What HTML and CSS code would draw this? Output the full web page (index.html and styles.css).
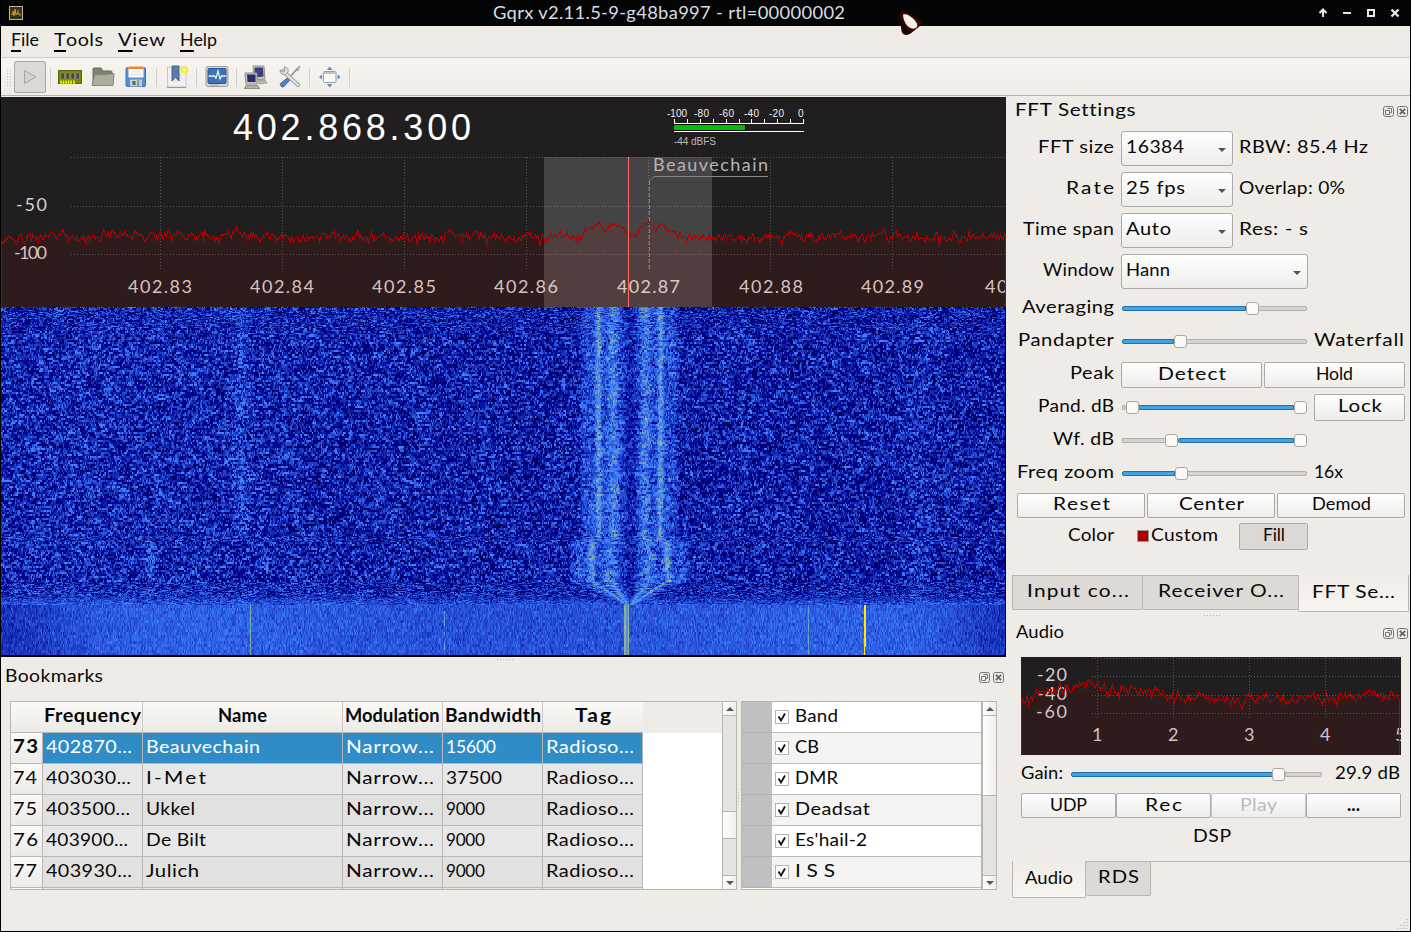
FILE: index.html
```html
<!DOCTYPE html>
<html lang="en">
<head>
<meta charset="utf-8">
<title>Gqrx</title>
<link rel="stylesheet" href="styles.css">
</head>
<body>
<div class="window">
  <header class="titlebar">
    <svg class="app-icon" viewBox="0 0 14 14"><rect x=".5" y=".5" width="13" height="13" fill="#3c2f1a" stroke="#b9b4ad"/><path d="M2 8h2V5l1 5 1-7 1 6 1-2h2M9 4v5M11 7v3" fill="none" stroke="#c79a26"/></svg>
    <span class="title" data-w="352">Gqrx v2.11.5-9-g48ba997 - rtl=00000002</span>
    <svg class="wm" viewBox="0 0 96 26"><path d="M12 9v8M8.500 13l3.500-3.500 3.500 3.500" fill="none" stroke="#e6e6e6" stroke-width="2"/><path d="M32 13h8" stroke="#e6e6e6" stroke-width="2"/><rect x="57" y="10" width="6" height="6" fill="none" stroke="#e6e6e6" stroke-width="2"/><path d="M80.500 9.500l7 7m0-7l-7 7" stroke="#e6e6e6" stroke-width="2.400"/></svg>
    <svg class="cursor" viewBox="0 0 24 26"><path d="M2.500 2Q4 .5 6 1.500 18 7 23.500 12.500 23 16 18 19 13 24 9 25 4 25 3.500 21 2 10 2.500 2z" fill="#3d0507"/><path d="M3 9Q3 23 8 25L13 23 8 18z" fill="#140506"/><path d="M5 4.500Q9 3 15 8.500 21 14 18.500 17.500 14 20.500 9 15.500 5 10 5 4.500z" fill="#f3f4e6"/></svg>
  </header>
  <nav class="menubar">
    <span class="menu m1"><span data-w="28"><u>F</u>ile</span></span>
    <span class="menu m2"><span data-w="49"><u>T</u>ools</span></span>
    <span class="menu m3"><span data-w="47"><u>V</u>iew</span></span>
    <span class="menu m4"><span data-w="37"><u>H</u>elp</span></span>
  </nav>
  <div class="toolbar">
    <i class="handle"></i>
    <span class="tool play"><svg viewBox="0 0 24 24"><path d="M6.500 5.500v13L18 12z" fill="#d3d2d0" stroke="#a5a4a2"/></svg></span>
    <i class="sep"></i>
    <span class="tool"><svg viewBox="0 0 24 24"><rect x=".5" y="5.500" width="23" height="13" fill="#7d8600" stroke="#5d6308"/><path d="M3 8h3.500v6H3zM8 8h3.500v6H8zM13 8h3.500v6H13zM18 8h3.500v6H18z" fill="#45474c" stroke="#9a9c80" stroke-width=".6"/><path d="M3 15.500v4M5.500 15.500v4M8 15.500v4M10.500 15.500v4M13 15.500v4M16 15.500v4" stroke="#e8f200" stroke-width="1.600"/></svg></span>
    <span class="tool"><svg viewBox="0 0 24 24"><path d="M2 19V4q0-1 1-1h7l2 3h8q1 0 1 1v12z" fill="#7f8172" stroke="#696b5e"/><path d="M1 20.500L4 9.500q8 1 19-1l-1 12z" fill="#acae9c" stroke="#85877a"/></svg></span>
    <span class="tool"><svg viewBox="0 0 24 24"><rect x="2" y="2.500" width="19.500" height="19" rx="1.500" fill="#5690cf" stroke="#3f71ae"/><path d="M4.500 1.500h15v11h-15z" fill="#fafafa"/><path d="M4.500 1.500h15v2.500h-15z" fill="#ef8430"/><path d="M6.500 7h11M6.500 9.500h11" stroke="#e0e0e0"/><rect x="6" y="14.500" width="12" height="7" fill="#c3c9c9"/><rect x="8" y="15.500" width="4" height="5" fill="#667" stroke="#eee" stroke-width=".6"/><path d="M14 15v6" stroke="#70917c" stroke-width="1.500"/></svg></span>
    <i class="sep"></i>
    <span class="tool n"><svg viewBox="0 0 24 24"><rect x="2.500" y="2" width="18.500" height="20" fill="#f1f1ef" stroke="#c7c6c4"/><path d="M2 22.500h19" stroke="#999"/><path d="M7 10h10M7 13h10M7 16h9" stroke="#d5d5d2"/><path d="M7 1h7v15l-3.500-3.500L7 16z" fill="#5d7aa8" stroke="#4a658f"/><circle cx="19.500" cy="5" r="3.800" fill="#f6ed3a"/><circle cx="19.500" cy="5" r="1.500" fill="#fffdb0"/></svg></span>
    <i class="sep"></i>
    <span class="tool n"><svg viewBox="0 0 24 24"><rect x="1" y="1.500" width="22" height="20" rx="2" fill="#d8dad5" stroke="#9d9f9a"/><rect x="3" y="3.500" width="18" height="15" rx="1" fill="#3f72b8" stroke="#2a548e"/><path d="M3.500 11h6l1.500 2 2-7 2 8 1.500-3h4.500" fill="none" stroke="#e6f5dc" stroke-width="1.300"/><path d="M5 20h9" stroke="#a7aaa5"/></svg></span>
    <i class="sep"></i>
    <span class="tool n net"><svg viewBox="0 0 24 24"><path d="M9 1h11l1 13-11 1z" fill="#c9c9c1" stroke="#92928a"/><path d="M10.500 2.500h8.500l.5 9-9 1z" fill="#3d3c81"/><path d="M14 15h7l2 3-8 1z" fill="#b9b9b0" stroke="#898983" stroke-width=".6"/><path d="M1 8h12v11H2z" fill="#c9c9c1" stroke="#8d8d86"/><path d="M3 9.500h8.500V17H3.500z" fill="#2d2c68"/><path d="M2 20.500h12l1.500 3H.5z" fill="#b3b3ab" stroke="#777771" stroke-width=".7"/></svg></span>
    <span class="tool n"><svg viewBox="0 0 24 24"><path d="M20 3L10 14" stroke="#8c8e8a" stroke-width="1.500"/><path d="M9.500 13l2 2.500L6 21.500q-2 1.500-3-.5-1.500-1.500 0-3z" fill="#4d83c4" stroke="#3b689f"/><path d="M5 6l15 14" stroke="#8e908c" stroke-width="4" stroke-linecap="round"/><path d="M5 6l15 14" stroke="#dfe0dd" stroke-width="2.400" stroke-linecap="round"/><path d="M6 2q5 0 4 5-2 4-6 2-2-1-2-4l3 2 2-1z" fill="#e4e5e2" stroke="#8e908c" stroke-width=".9"/><path d="M18 4l4-3-2 5z" fill="#bbb" stroke="#888" stroke-width=".6"/></svg></span>
    <i class="sep"></i>
    <span class="tool n"><svg viewBox="0 0 24 24"><rect x="5.500" y="6.500" width="12.500" height="11" rx="1" fill="#f8f8f8" stroke="#9b9d99"/><path d="M6 8h11.500" stroke="#c3c5c1" stroke-width="2"/><path d="M9 5h5.500L11.700 1.500zM9 19h5.500l-2.800 3.500zM4 9.500v5L1 12zM19.500 9.500v5l3.200-2.500z" fill="#5b8bc9"/></svg></span>
    <i class="sep"></i>
  </div>
  <div class="body">
    <main class="left">
      <svg class="plot" viewBox="1 97 1005 210">
        <text x="233" y="140" class="freq" textLength="238">402.868.300</text>
        <g class="meter">
          <text x="667" y="117" textLength="20">-100</text><text x="694" y="117" textLength="15">-80</text><text x="719" y="117" textLength="15">-60</text><text x="744" y="117" textLength="15">-40</text><text x="769" y="117" textLength="15">-20</text><text x="798" y="117">0</text>
          <text x="674" y="145" class="dim" textLength="42">-44 dBFS</text>
          <path class="crisp" d="M674 123.500h130M674.500 119v4M687.500 119v4M700.500 119v4M713.500 119v4M726.500 119v4M739.500 119v4M751.500 119v4M764.500 119v4M777.500 119v4M790.500 119v4M803.500 119v4M674 131.500h130" stroke="#fff"/>
          <rect x="673" y="124" width="73" height="7" fill="#000"/><rect x="674" y="125" width="71" height="5" fill="#00c000"/>
        </g>
        <path class="grid crisp" d="M71 157.500H1005M71 206.500H1005M71 254.500H1005M160.500 157V269M282.500 157V269M404.500 157V269M526.500 157V269M648.500 157V269M770.500 157V269M892.500 157V269"/>
        <g class="axis"><text x="16" y="211" textLength="31">-50</text><text x="14" y="259" textLength="33">-100</text>
        <text x="128" y="293" textLength="64">402.83</text><text x="250" y="293" textLength="64">402.84</text><text x="372" y="293" textLength="64">402.85</text><text x="494" y="293" textLength="64">402.86</text><text x="617" y="293" textLength="63">402.87</text><text x="739" y="293" textLength="64">402.88</text><text x="861" y="293" textLength="63">402.89</text><text x="985" y="293" textLength="64">402.90</text></g>
        <rect x="544" y="157" width="168" height="150" fill="#fff" fill-opacity=".17"/>
        <text x="653" y="171" class="mark" textLength="115">Beauvechain</text>
        <path d="M768 176.500H654L649.500 181" fill="none" stroke="#858487"/><path class="crisp" d="M649.500 181V269" stroke="#858487" stroke-dasharray="4 2"/>
        <path id="trace-fill" fill="#ff0000" fill-opacity=".065"/><path id="trace" class="trace"/>
        <rect x="628" y="157" width="1" height="150" fill="#ff6b6b"/>
      </svg>
      <canvas id="waterfall" class="waterfall" width="1004" height="348"></canvas>
      <div class="vsplit"><i class="dots"></i></div>
      <div class="dock-title bm"><span data-w="98">Bookmarks</span><span class="dock-btns"><svg viewBox="0 0 25 11"><use href="#dockbtns"/></svg></span></div>
      <div class="lists">
        <section class="box bookmarks">
          <div class="table">
            <div class="row head"><b class="corner"></b><b><span data-w="97">Frequency</span></b><b><span data-w="49">Name</span></b><b><span data-w="95">Modulation</span></b><b><span data-w="96">Bandwidth</span></b><b class="end"><span data-w="36">Tag</span></b></div>
            <div class="row sel"><b><span data-w="25">73</span></b><span><span data-w="86">402870...</span></span><span><span data-w="114">Beauvechain</span></span><span><span data-w="88">Narrow...</span></span><span><span data-w="50">15600</span></span><span><span data-w="88">Radioso...</span></span></div>
            <div class="row"><b><span data-w="24">74</span></b><span><span data-w="85">403030...</span></span><span><span data-w="60">I-Met</span></span><span><span data-w="88">Narrow...</span></span><span><span data-w="56">37500</span></span><span><span data-w="88">Radioso...</span></span></div>
            <div class="row alt"><b><span data-w="24">75</span></b><span><span data-w="84">403500...</span></span><span><span data-w="49">Ukkel</span></span><span><span data-w="88">Narrow...</span></span><span><span data-w="39">9000</span></span><span><span data-w="88">Radioso...</span></span></div>
            <div class="row"><b><span data-w="25">76</span></b><span><span data-w="82">403900...</span></span><span><span data-w="60">De Bilt</span></span><span><span data-w="88">Narrow...</span></span><span><span data-w="39">9000</span></span><span><span data-w="88">Radioso...</span></span></div>
            <div class="row alt"><b><span data-w="24">77</span></b><span><span data-w="86">403930...</span></span><span><span data-w="53">Julich</span></span><span><span data-w="88">Narrow...</span></span><span><span data-w="39">9000</span></span><span><span data-w="88">Radioso...</span></span></div>
            <div class="row"><b></b><span></span><span></span><span></span><span></span><span></span></div>
          </div>
          <div class="scroll"><i class="arrow up"></i><i class="groove g1"></i><i class="thumb t1"></i><i class="groove rest"></i><i class="arrow down"></i></div>
        </section>
        <i class="vdots"></i>
        <section class="box tags">
          <div class="taglist">
            <div class="tag"><i></i><span><svg class="check" viewBox="0 0 14 14"><use href="#check"/></svg><span data-w="43">Band</span></span></div>
            <div class="tag alt"><i></i><span><svg class="check" viewBox="0 0 14 14"><use href="#check"/></svg><span data-w="24">CB</span></span></div>
            <div class="tag"><i></i><span><svg class="check" viewBox="0 0 14 14"><use href="#check"/></svg><span data-w="43">DMR</span></span></div>
            <div class="tag alt"><i></i><span><svg class="check" viewBox="0 0 14 14"><use href="#check"/></svg><span data-w="75">Deadsat</span></span></div>
            <div class="tag"><i></i><span><svg class="check" viewBox="0 0 14 14"><use href="#check"/></svg><span data-w="72">Es'hail-2</span></span></div>
            <div class="tag alt"><i></i><span><svg class="check" viewBox="0 0 14 14"><use href="#check"/></svg><span data-w="40">ISS</span></span></div>
          </div>
          <div class="scroll"><i class="arrow up"></i><i class="thumb t2"></i><i class="groove rest"></i><i class="arrow down"></i></div>
        </section>
      </div>
    </main>
    <aside class="right">
      <div class="dock-title"><span data-w="120">FFT Settings</span><span class="dock-btns"><svg viewBox="0 0 25 11"><use href="#dockbtns"/></svg></span></div>
      <div class="settings">
        <div class="set combo-row"><label><span data-w="76">FFT size</span></label><span class="combo"><span data-w="58">16384</span></span><span class="info"><span data-w="129">RBW: 85.4 Hz</span></span></div>
        <div class="set combo-row"><label><span data-w="48">Rate</span></label><span class="combo"><span data-w="59">25 fps</span></span><span class="info"><span data-w="106">Overlap: 0%</span></span></div>
        <div class="set combo-row"><label><span data-w="91">Time span</span></label><span class="combo"><span data-w="45">Auto</span></span><span class="info"><span data-w="69">Res: - s</span></span></div>
        <div class="set combo-row last"><label><span data-w="71">Window</span></label><span class="combo wide"><span data-w="44">Hann</span></span></div>
        <div class="set"><label><span data-w="92">Averaging</span></label><span class="slider"><i class="fill" style="width:67.2%"></i><i class="knob"></i><i class="empty"></i></span></div>
        <div class="set"><label><span data-w="96">Pandapter</span></label><span class="slider"><i class="fill" style="width:28.2%"></i><i class="knob"></i><i class="empty"></i></span><span class="info"><span data-w="90">Waterfall</span></span></div>
        <div class="set"><label><span data-w="44">Peak</span></label><span class="btn b141"><span data-w="68">Detect</span></span><span class="btn b141 gap3"><span data-w="37">Hold</span></span></div>
        <div class="set"><label><span data-w="76">Pand. dB</span></label><span class="slider range"><i class="empty" style="max-width:2.2%"></i><i class="knob"></i><i class="fill grow"></i><i class="knob"></i></span><span class="btn lock"><span data-w="44">Lock</span></span></div>
        <div class="set"><label><span data-w="61">Wf. dB</span></label><span class="slider range"><i class="empty" style="max-width:23.9%"></i><i class="knob"></i><i class="fill grow"></i><i class="knob"></i></span></div>
        <div class="set"><label><span data-w="97">Freq zoom</span></label><span class="slider"><i class="fill" style="width:28.7%"></i><i class="knob"></i><i class="empty"></i></span><span class="info"><span data-w="29">16x</span></span></div>
        <div class="set three"><span class="btn"><span data-w="57">Reset</span></span><span class="btn"><span data-w="65">Center</span></span><span class="btn"><span data-w="59">Demod</span></span></div>
        <div class="set"><label><span data-w="46">Color</span></label><span class="color"><i></i><span data-w="67">Custom</span></span><span class="btn fillbtn"><span data-w="22">Fill</span></span></div>
      </div>
      <div class="tabs top"><span class="tab w130"><span data-w="102">Input co...</span></span><span class="tab w156"><span data-w="126">Receiver O...</span></span><span class="tab on w112"><span data-w="83">FFT Se...</span></span></div>
      <div class="hsplit"><i class="dots"></i></div>
      <div class="dock-title audio"><span data-w="48">Audio</span><span class="dock-btns"><svg viewBox="0 0 25 11"><use href="#dockbtns"/></svg></span></div>
      <svg class="audio-plot" viewBox="1021 657 380 98">
        <path class="grid crisp" d="M1092 658.500H1401M1092 676.500H1401M1092 695.500H1401M1092 713.500H1401M1097.500 657V719M1173.500 657V719M1249.500 657V719M1325.500 657V719"/>
        <g class="axis"><text x="1037" y="681" textLength="30">-20</text><text x="1037" y="700" textLength="30">-40</text><text x="1036" y="718" textLength="31">-60</text><text x="1092" y="741">1</text><text x="1168" y="741">2</text><text x="1244" y="741">3</text><text x="1320" y="741">4</text><text x="1395" y="741">5</text></g>
        <path id="audio-fill" fill="#ff0000" fill-opacity=".065"/><path id="audio-trace" class="trace"/>
      </svg>
      <div class="gain"><span data-w="42">Gain:</span><span class="slider long"><i class="fill" style="width:80.3%"></i><i class="knob"></i><i class="empty"></i></span><span class="db"><span data-w="65">29.9 dB</span></span></div>
      <div class="abtns"><span class="btn"><span data-w="37">UDP</span></span><span class="btn"><span data-w="37">Rec</span></span><span class="btn off"><span data-w="37">Play</span></span><span class="btn"><b data-w="13">...</b></span></div>
      <div class="dsp"><span data-w="38">DSP</span></div>
      <div class="tabs bottom"><span class="tab on w74"><span data-w="48">Audio</span></span><span class="tab w66"><span data-w="41">RDS</span></span></div>
      <svg class="grip" viewBox="0 0 12 12"><path d="M10 1v1M7 4v1M10 4v1M4 7v1M7 7v1M10 7v1M1 10v1M4 10v1M7 10v1M10 10v1" stroke="#aaa69f" stroke-width="1"/></svg>
    </aside>
  </div>
</div>
<svg class="defs"><defs>
  <g id="dockbtns"><rect x=".5" y=".5" width="10" height="10" rx="2" fill="none" stroke="#787672"/><path d="M4.500 2.500h4v4h-2M2.500 4.500h4v4h-4z" fill="none" stroke="#787672"/><rect x="14.500" y=".5" width="10" height="10" rx="2" fill="none" stroke="#787672"/><path d="M16.800 2.800l5.400 5.400m0-5.400l-5.400 5.400" stroke="#666460" stroke-width="1.800"/></g>
  <g id="check"><rect x=".5" y=".5" width="13" height="13" fill="#fff" stroke="#b6b2ad"/><path d="M3.500 6.500l2.500 4 4-7" fill="none" stroke="#111" stroke-width="1.800"/></g>
</defs></svg>
<script src="app.js"></script>
</body>
</html>
```

FILE: styles.css
```css
* { box-sizing: border-box; }
html, body { margin: 0; width: 1411px; height: 932px; overflow: hidden; }
body { background: #000; font-family: Lato, "Noto Sans", sans-serif; font-size: 18px; line-height: 24px; color: #080808; }
i { font-style: normal; display: block; flex: none; }
svg { display: block; flex: none; }
span[data-w], b[data-w] { display: inline-block; white-space: pre; flex: none; transform-origin: 0 50%; }
.defs { position: absolute; width: 0; height: 0; }
.crisp { shape-rendering: crispEdges; }

.window { width: 1411px; height: 932px; padding: 0 1px 1px; display: flex; flex-direction: column; }
.titlebar { height: 26px; background: #050505; display: flex; align-items: center; position: relative; flex: none; color: #d9dde0; }
.app-icon { width: 14px; height: 14px; margin-left: 8px; }
.title { font-size: 17px; padding-bottom: 1px; margin-left: 470px; }
.wm { width: 96px; height: 26px; margin-left: auto; margin-right: 3px; }
.cursor { position: absolute; left: 897px; top: 10px; width: 24px; height: 26px; z-index: 5; }
.menubar { height: 32px; background: #efece7; border-bottom: 1px solid #d0cdc9; display: flex; padding: 1px 0 0 10px; flex: none; }
.menu u { text-decoration: none; border-bottom: 2px solid #000; padding-bottom: 1px; display: inline-block; line-height: 19px; height: 22px; }
.m1 { width: 43px; } .m2 { width: 64px; } .m3 { width: 62px; }
.toolbar { height: 39px; background: linear-gradient(#f8f5f0, #efece7); border-bottom: 1px solid #f1eee9; box-shadow: inset 0 -1px #b4b0ac; display: flex; align-items: center; flex: none; padding-left: 5px; }
.handle { width: 5px; height: 17px; margin-right: 3px; background: radial-gradient(circle, #bdb9b4 0 .7px, transparent .8px) 0 0 / 3px 3px; }
.tool { width: 33px; height: 32px; display: flex; align-items: center; justify-content: center; padding-right: 3px; }
.tool svg { width: 24px; height: 24px; }
.tool.n { width: 32px; }
.tool.net { width: 33px; padding-right: 6px; }
.tool.play { width: 32px; margin-right: 1px; border: 1px solid #a9a6a3; border-radius: 2px; background: #dbd8d5; padding-right: 0; }
.sep { width: 8px; height: 19px; background: linear-gradient(#d2cfca, #d2cfca) 3px 0 / 1px 100% no-repeat; }
.sep:nth-child(n+4) { background-position-x: 2px; }

.body { flex: 1; display: flex; background: #efece7; }
.left { width: 1005px; display: flex; flex-direction: column; }
.plot { width: 1005px; height: 210px; background: #201e1f; }
.waterfall { display: block; width: 1005px; height: 350px; background: #000; border-right: 1px solid #000; border-bottom: 2px solid #000; }
.freq { font: 36px "Liberation Sans", sans-serif; fill: #fff; }
.meter text { font: 10px "Liberation Sans", sans-serif; fill: #f0f0f0; }
.meter .dim { fill: #bbb; }
.grid { fill: none; stroke: #555456; stroke-dasharray: 1 2; }
.axis text { font-size: 18px; fill: #d6cfcf; }
.mark { font-size: 18px; fill: #b6b5b7; }
.trace { fill: none; stroke: #b40000; stroke-width: 1; shape-rendering: crispEdges; }

.vsplit { height: 7px; padding: 2px 0 0 496px; }
.dots { width: 18px; height: 2px; background: linear-gradient(90deg, #b9b5b0 1px, transparent 1px) 0 0 / 3px 1px repeat-x; }
.dock-title { height: 26px; display: flex; align-items: center; justify-content: space-between; flex: none; padding: 0 2px 2px 9px; }
.dock-title.bm { padding: 0 2px 4px 4px; }
.dock-btns { padding-top: 5px; }
.dock-btns svg { width: 25px; height: 11px; }
.lists { display: flex; padding: 11px 0 0 9px; }
.box { height: 189px; border: 1px solid #b8b4b0; background: #fff; display: flex; overflow: hidden; }
.bookmarks { width: 727px; }
.tags { width: 256px; }
.vdots { width: 4px; background: linear-gradient(#b9b5b0 1px, transparent 1px) 1px 88px / 1px 3px repeat-y; clip-path: inset(86px 0 84px 0); }
.table { width: 711px; background: #fff; }
.row { display: grid; grid-template-columns: 32px 100px 200px 100px 100px 100px; height: 31px; width: 632px; }
.row > * { border-right: 1px solid #b9b7b5; border-bottom: 1px solid #b9b7b5; padding: 0 0 4px 3px; background: #e7e7e7; display: flex; align-items: center; overflow: hidden; white-space: nowrap; }
.row.alt > span { background: #e2e1e0; }
.row.sel > span { background: #308cc6; color: #fff; }
.row > b { background: linear-gradient(#fcfaf7, #eceae6); font-weight: 400; padding-left: 2px; }
.row.sel > b { font-weight: 700; }
.row.head { width: 711px; background: #efece7; }
.row.head > b { justify-content: center; font-weight: 700; padding: 0 0 4px; border-right-color: #cbc7c3; }
.row.head > b.corner { border-right: 0; }
.row.head > b.end { border-right: 0; }
.scroll { width: 15px; border-left: 1px solid #b8b4b0; display: flex; flex-direction: column; background: #e4e3df; flex: none; }
.arrow { height: 14px; background: linear-gradient(90deg, #fdfdfc, #efedea); display: flex; justify-content: center; align-items: center; }
.arrow.up { border-bottom: 1px solid #b8b4b0; }
.arrow.down { border-top: 1px solid #b8b4b0; }
.arrow::after { content: ""; border: 4px solid transparent; }
.arrow.up::after { border-bottom-color: #555; border-top: 0; }
.arrow.down::after { border-top-color: #555; border-bottom: 0; }
.g1 { height: 95px; }
.thumb { background: linear-gradient(90deg, #fff, #efedea); border-bottom: 1px solid #b8b4b0; }
.t1 { height: 28px; border-top: 1px solid #b8b4b0; }
.t2 { height: 80px; }
.groove.rest { flex: 1; }
.taglist { width: 240px; border-right: 1px solid #b8b4b0; }
.tag { height: 31px; display: flex; }
.tag > i { width: 30px; background: #c0c0c0; border-bottom: 1px solid #b4b3b2; }
.tag > span { flex: 1; display: flex; align-items: center; border-bottom: 1px solid #bdbbb9; padding: 0 0 4px 3px; }
.tag.alt > span { background: #f5f4f2; }
.check { width: 14px; height: 14px; margin: 4px 6px 0 0; }
.tags .scroll { width: 14px; }

.right { width: 404px; display: flex; flex-direction: column; position: relative; }
.settings { padding-top: 8px; height: 452px; }
.set { height: 33px; display: flex; align-items: center; padding-left: 6px; }
.set label { width: 102px; display: flex; justify-content: flex-end; padding-bottom: 5px; margin-right: 7px; }
.combo-row { height: 41px; align-items: flex-start; }
.combo-row label, .combo-row .info { padding-top: 3px; }
.combo-row.last { height: 38px; }
.combo { width: 112px; height: 35px; border: 1px solid #aca9a6; border-radius: 3px; background: linear-gradient(#fefefe, #eeedeb); padding: 2px 6px 5px 4px; display: flex; justify-content: space-between; align-items: flex-start; }
.combo::after { content: ""; border: 4px solid transparent; border-top-color: #555; border-bottom: 0; margin-top: 14px; }
.combo.wide { width: 187px; }
.info { margin-left: 6px; padding-bottom: 5px; }
.slider { width: 185px; margin: 0 1px; height: 13px; display: flex; align-items: center; }
.slider.range { width: 184px; margin-right: 2px; }
.fill { height: 5px; border: 1px solid #2371a6; border-radius: 2px 0 0 2px; background: #42a2e2; }
.fill.grow, .empty { flex: 1; }
.empty { height: 5px; border: 1px solid #b3afab; border-radius: 0 2px 2px 0; background: #d6d3d0; }
.knob { width: 13px; height: 13px; border: 1px solid #aaa6a2; border-radius: 3px; background: #fbfaf9; margin: 0 -.5px; z-index: 1; }
.btn { height: 26px; border: 1px solid #aca9a6; border-radius: 2px; background: linear-gradient(#fefefe, #eeedeb); display: flex; align-items: center; justify-content: center; padding-bottom: 3px; flex: none; }
.b141 { width: 141px; }
.gap3 { margin-left: 2px; }
.lock { width: 91px; height: 27px; margin-left: 6px; padding-bottom: 5px; }
.set.three { height: 30px; padding-left: 11px; gap: 2px; }
.three .btn { width: 128px; height: 25px; padding-bottom: 4px; }
.color { width: 118px; display: flex; align-items: center; padding: 0 0 5px 16px; gap: 2px; }
.color i { width: 12px; height: 12px; border: 1px solid #999; background: #a80000; margin-top: 4px; }
.fillbtn { width: 69px; height: 27px; background: #dbd8d6; padding-bottom: 5px; }
.tabs { height: 36px; padding-left: 6px; display: flex; align-items: flex-start; flex: none; }
.tab { height: 35px; border: 1px solid #b9b5b1; background: #dddad6; border-radius: 0 0 2px 2px; display: flex; align-items: center; justify-content: center; padding-bottom: 5px; flex: none; }
.tab.on { height: 37px; background: linear-gradient(#efece7, #f9f6f1); border-top: 0; padding-bottom: 4px; }
.w130 { width: 130px; border-right: 0; } .w156 { width: 156px; border-right: 0; } .w112 { width: 111px; }
.w74 { width: 74px; } .w66 { width: 65px; border-left: 0; }
.tabs.bottom { background: linear-gradient(#b9b5b1, #b9b5b1) 79px 0 / 325px 1px no-repeat; }
.hsplit { height: 9px; padding: 4px 0 0 198px; }
.dock-title.audio { margin-bottom: 11px; padding: 0 2px 4px 10px; }
.audio-plot { width: 380px; height: 98px; margin-left: 15px; background: #201e1f; }
.gain { height: 38px; display: flex; align-items: center; padding: 0 6px 0 15px; }
.gain > span[data-w] { margin-bottom: 4px; }
.slider.long { width: 251px; margin-left: 8px; margin-right: 13px; }
.db { padding-bottom: 4px; }
.abtns { display: flex; padding: 0 0 1px 15px; }
.abtns .btn { width: 95px; height: 25px; }
.btn.off { color: #bdbbb8; border-color: #c9c6c3; }
.dsp { height: 42px; padding: 4px 0 0 187px; }
.grip { width: 12px; height: 12px; position: absolute; right: 1px; bottom: 1px; }
```

FILE: app.js
```js
// Fit each label to its layout slot, part by glyph width and part by tracking.
document.querySelectorAll('[data-w]').forEach(function (el) {
  var n = el.textContent.length;
  var w = Number(el.dataset.w);
  var natural = el.getBoundingClientRect().width;
  var scale = Math.max(0.94, Math.min(1.16, Math.pow(w / natural, 0.7)));
  var box = w / scale;
  el.style.letterSpacing = ((box - natural) / Math.max(1, n - 1)).toFixed(3) + 'px';
  el.style.width = box.toFixed(3) + 'px';
  el.style.marginRight = (w - box).toFixed(3) + 'px';
  el.style.transform = 'scaleX(' + scale.toFixed(4) + ')';
});

var seed = 4028683;
function rnd() { seed = (seed * 1664525 + 1013904223) >>> 0; return seed / 4294967296; }
function gauss() { return rnd() + rnd() + rnd() + rnd() - 2; }
function curve(points, x) {
  for (var i = 1; i < points.length; i++) {
    if (x <= points[i][0]) {
      var a = points[i - 1], b = points[i];
      return a[1] + (b[1] - a[1]) * (x - a[0]) / (b[0] - a[0]);
    }
  }
  return points[points.length - 1][1];
}
function drawTrace(id, fillId, x0, x1, bottom, points, amp, calm) {
  var d = '', prev = 0;
  for (var x = x0; x <= x1; x++) {
    prev = prev * 0.5 + gauss() * amp;
    var dip = rnd() > 0.97 ? 6 : 0;
    var k = calm && x > 583 && x < 676 ? 0.5 : 1;
    d += (d ? 'L' : 'M') + (x + 0.5) + ' ' + (curve(points, x) + (prev + dip) * k).toFixed(1);
  }
  document.getElementById(fillId).setAttribute('d', d + 'V' + bottom + 'H' + x0 + 'Z');
  document.getElementById(id).setAttribute('d', 'M' + (x0 + 0.5) + ' ' + bottom + d.replace('M', 'L') + 'V' + bottom);
}
drawTrace('trace', 'trace-fill', 1, 1005, 307, [[1, 238], [110, 235], [230, 235], [300, 237], [578, 237], [584, 230], [593, 228], [599, 221], [604, 233], [611, 223], [620, 226], [629, 236], [635, 236], [641, 225], [648, 224], [655, 230], [660, 222], [668, 229], [676, 231], [681, 238], [890, 236], [1005, 237]], 4, true);
drawTrace('audio-trace', 'audio-fill', 1021, 1399, 755, [[1021, 700], [1030, 698], [1048, 690], [1065, 687], [1090, 685], [1112, 689], [1130, 688], [1145, 691], [1165, 695], [1190, 700], [1280, 700], [1401, 696]], 5, false);

// Waterfall: level 0-255 mapped through the receiver's colour ramp.
function ramp(v) {
  if (v < 20) return [0, 0, 0];
  if (v < 70) return [0, 0, 140 * (v - 20) / 50];
  if (v < 100) return [60 * (v - 70) / 30, 125 * (v - 70) / 30, 115 * (v - 70) / 30 + 140];
  if (v < 150) return [195 * (v - 100) / 50 + 60, 130 * (v - 100) / 50 + 125, 255 - 255 * (v - 100) / 50];
  return [255, Math.max(0, 255 - 255 * (v - 150) / 100), 0];
}
function bell(x, c, w) { return Math.exp(-(x - c) * (x - c) / (2 * w * w)); }
var canvas = document.getElementById('waterfall');
var ctx = canvas.getContext('2d');
var W = canvas.width, H = canvas.height, img = ctx.createImageData(W, H);
var y = 0;
while (y < H) {
  var Y = y + 307, tail = Y >= 605;
  var rows = tail ? 3 : Y > 580 ? 1 : Y > 535 && Y < 542 ? 1 : Y < 340 ? (rnd() > 0.6 ? 2 : 1) : 2;
  var line = [], shape = Y < 540 ? 1 : Y < 580 ? 1.22 : Math.max(0.03, 1.22 * (606 - Y) / 26);
  var jit = gauss() * 2.5;
  var last = 0;
  for (var x = 0; x < W; x++) {
    var X = x + 1, v, n = gauss();
    if (rnd() > 0.3) last = last * 0.15 + n;
    if (tail) {
      v = 91 + 2 * Math.sin(X / 110) + n * 7 - 9 * bell(X, 0, 55) - 9 * bell(X, 1006, 40);
      if (X === 250) v = 117;
      if (X === 444 && rnd() > 0.5) v = 114;
      if (X === 624 || X === 625 || X === 628) v = 121 + n * 4;
      if (X === 626 || X === 627) v = 107;
      if (X === 808) v = 111 + n * 4;
      if (X === 864) v = 160;
      if (X === 865 && Y < 646) v = 156;
    } else {
      v = 76 + 3 * bell(X, 80, 200) + last * 22;
      if (Y > 582) v += (Y - 582) * 0.2;
      if (Y > 595) v += (Y - 595) * 0.9 - last * 10;
      if (Y < 532) v += 7 * bell(X, 241, 5);
      if (Y < 532 && X > 239 && X < 243 && rnd() > 0.7) v += 12;
      if (Y > 542 && Y < 580) v += 12 * bell(X, 151, 4);
      v += 4 * bell(X, 922, 8);
      var u = (X - 629) / shape;
      if (u > -50 && u < 51) {
        var s = 12 * Math.min(1, (51 - Math.abs(u)) / 6) * (1 - 0.9 * bell(u, 1, 5));
        s += 21 * bell(u, -31 + jit * 0.3, 2) + 15 * bell(u, -16 + jit, 3.5);
        s += 14 * bell(u, 16 - jit, 3.5) + 21 * bell(u, 31 - jit * 0.3, 2);
        v = v + s - last * 7;
        v = Math.min(v, 124);
      } else {
        v = Math.min(v, 102);
      }
    }
    line.push(ramp(v));
  }
  for (var r = 0; r < rows && y < H; r++, y++) {
    for (var i = 0; i < W; i++) {
      var o = (y * W + i) * 4, c = line[i];
      img.data[o] = c[0]; img.data[o + 1] = c[1]; img.data[o + 2] = c[2]; img.data[o + 3] = 255;
    }
  }
}
ctx.putImageData(img, 0, 0);
```
